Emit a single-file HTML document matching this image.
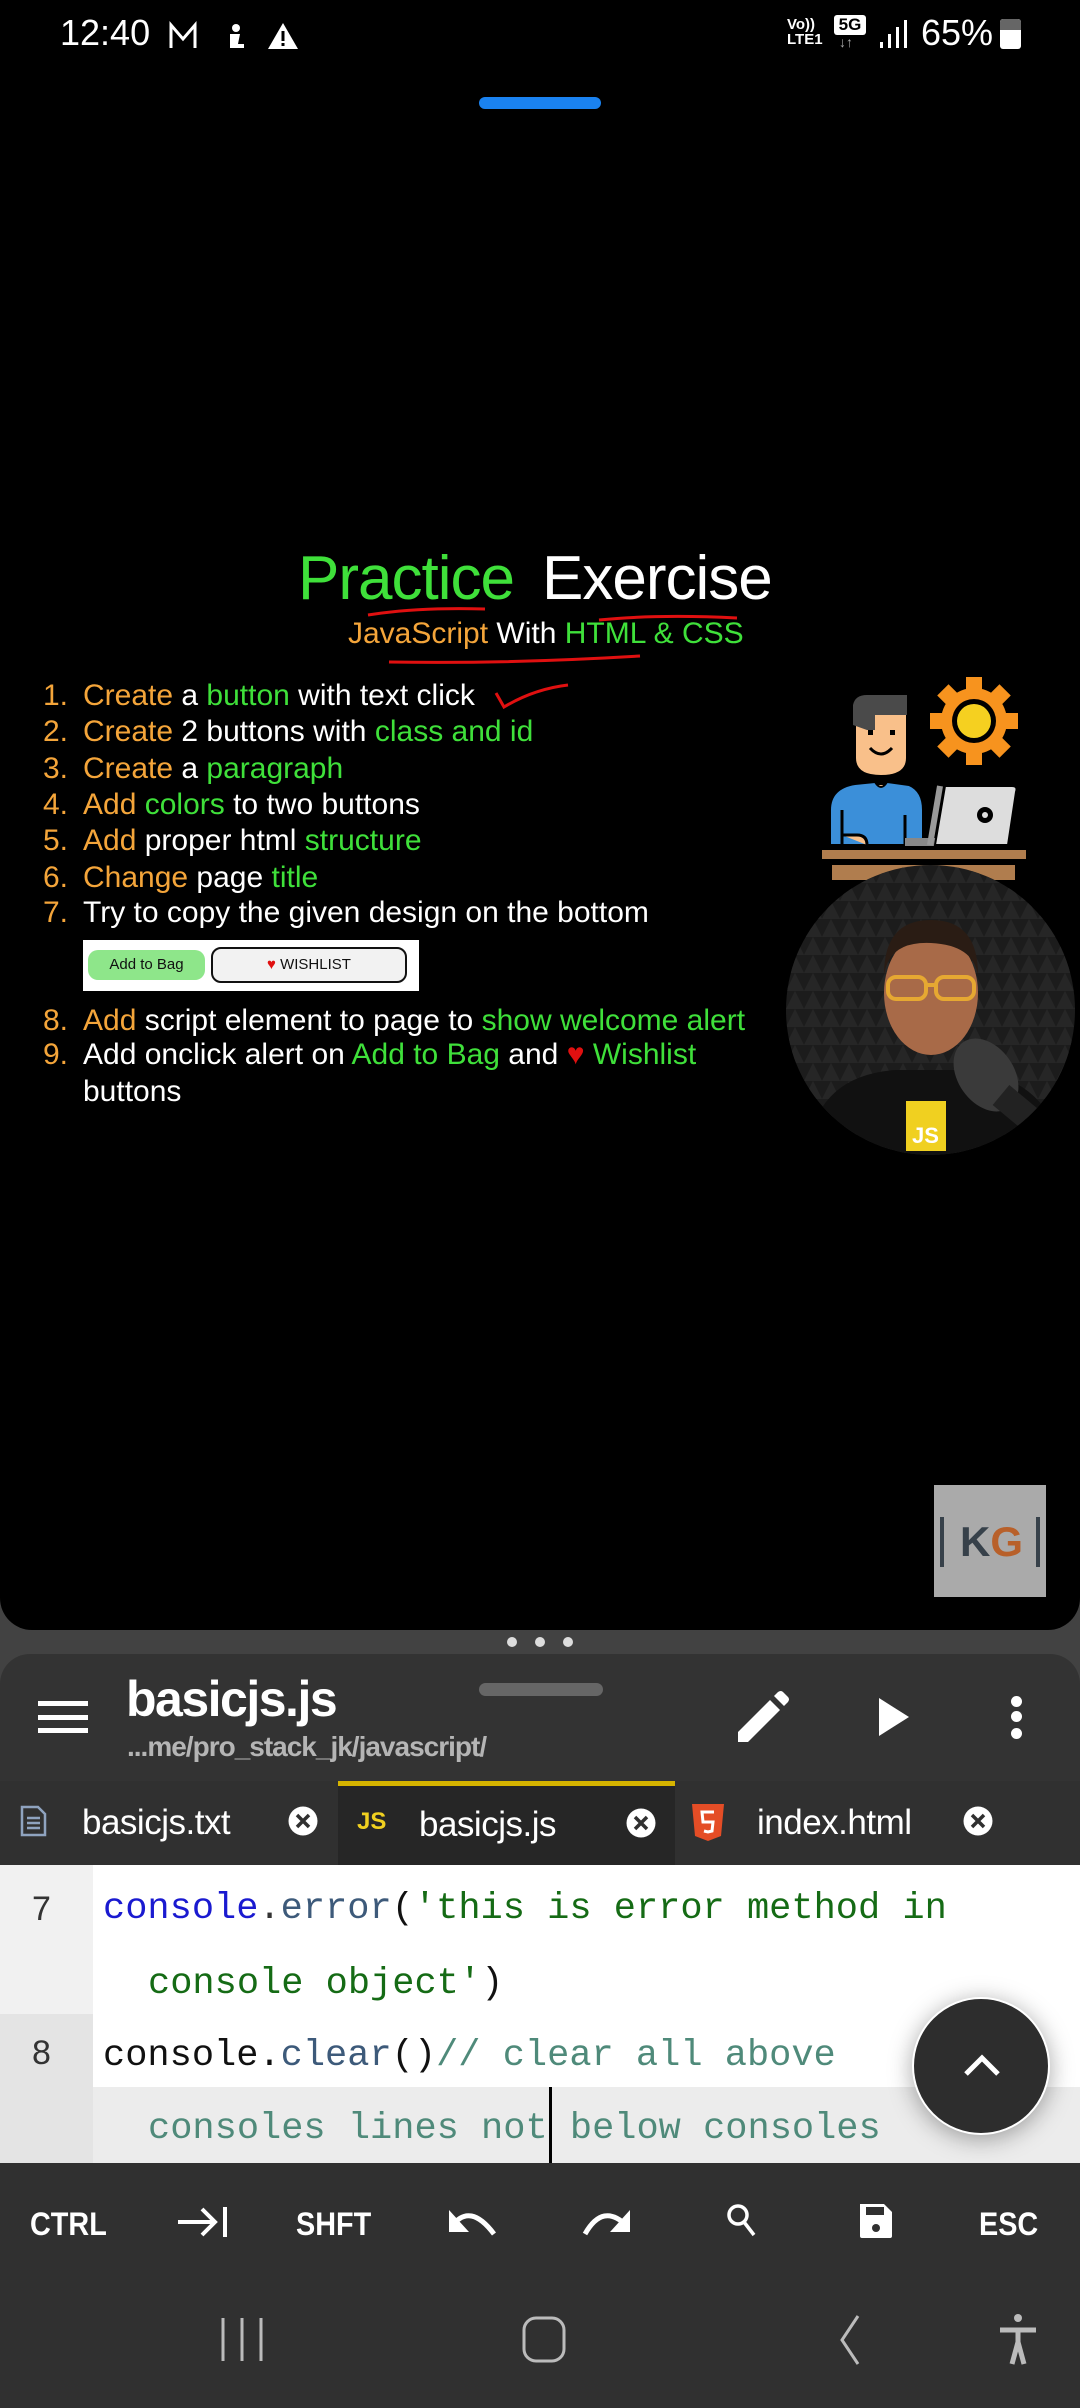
<!DOCTYPE html>
<html><head><meta charset="utf-8"><style>
*{margin:0;padding:0;box-sizing:border-box}
body{width:1080px;height:2408px;background:#424242;position:relative;overflow:hidden;font-family:"Liberation Sans",sans-serif}
.a{position:absolute;white-space:nowrap}
.o{color:#f4a53a}.g{color:#3fe03a}.w{color:#fff}
.li{position:absolute;left:0;font-size:30px;color:#fff;white-space:nowrap}
.li .n{position:absolute;left:43px;color:#f4a53a}
.li .t{position:absolute;left:83px}
.code{font-family:"Liberation Mono",monospace;font-size:37px;position:absolute;white-space:pre}
.key{position:absolute;top:2206px;font-size:32px;font-weight:bold;color:#fff;transform:scaleX(.9);transform-origin:left}
</style></head><body>
<div class="a" style="left:0;top:0;width:1080px;height:1630px;background:#000;border-radius:0 0 32px 32px"></div>
<div class="a" style="left:60px;top:12px;font-size:36px;color:#fff">12:40</div>
<svg class="a" style="left:168px;top:20px" width="135" height="32" viewBox="0 0 135 32">
<path d="M3 28V5l12 14L27 5v23" fill="none" stroke="#fff" stroke-width="3"/>
<circle cx="68" cy="8" r="4" fill="#fff"/><path d="M62 14h10l-2 10h6v4H62z" fill="#fff"/>
<path d="M100 29L115 3l15 26z" fill="#fff"/><rect x="113.5" y="11" width="3" height="10" fill="#000"/><rect x="113.5" y="23" width="3" height="3" fill="#000"/>
</svg>
<div class="a" style="left:787px;top:17px;font-size:15px;color:#fff;line-height:15px;font-weight:bold">Vo))<br>LTE1</div>
<div class="a" style="left:834px;top:15px;width:32px;height:20px;background:#fff;border-radius:3px;color:#000;font-size:17px;font-weight:bold;text-align:center;line-height:20px">5G</div>
<div class="a" style="left:839px;top:34px;font-size:14px;color:#aaa">↓↑</div>
<svg class="a" style="left:880px;top:18px" width="30" height="32"><rect x="0" y="24" width="3" height="6" fill="#fff"/><rect x="8" y="16" width="3" height="14" fill="#fff"/><rect x="16" y="9" width="3" height="21" fill="#fff"/><rect x="24" y="2" width="3" height="28" fill="#fff"/></svg>
<div class="a" style="left:921px;top:12px;font-size:36px;color:#fff">65%</div>
<div class="a" style="left:1000px;top:19px;width:21px;height:30px;background:#fff;border-radius:3px"></div>
<div class="a" style="left:1000px;top:19px;width:21px;height:11px;background:#666;border-radius:3px 3px 0 0"></div>
<div class="a" style="left:479px;top:97px;width:122px;height:12px;background:#1a82f0;border-radius:6px"></div>

<div class="a g" style="left:298px;top:543px;font-size:62px;letter-spacing:-1px">Practice</div>
<div class="a w" style="left:542px;top:543px;font-size:62px;letter-spacing:-1px">Exercise</div>
<div class="a" style="left:348px;top:617px;font-size:30px;letter-spacing:0px"><span class="o">JavaScript</span> <span class="w">With</span> <span class="g">HTML &amp; CSS</span></div>
<svg class="a" style="left:0;top:0" width="1080" height="720">
<path d="M368 615q50-8 117-6" stroke="#e01010" stroke-width="3" fill="none"/>
<path d="M599 620q60-6 138-2" stroke="#e01010" stroke-width="3" fill="none"/>
<path d="M389 662q120 2 251-6" stroke="#e01010" stroke-width="3" fill="none"/>
<path d="M496 693l8 14q30-18 64-22" stroke="#e01010" stroke-width="3" fill="none"/>
</svg>
<div class="li" style="top:679px"><span class="n">1.</span><span class="t"><span class="o">Create</span> a <span class="g">button</span> with text click</span></div>
<div class="li" style="top:715px"><span class="n">2.</span><span class="t"><span class="o">Create</span> 2 buttons with <span class="g">class and id</span></span></div>
<div class="li" style="top:752px"><span class="n">3.</span><span class="t"><span class="o">Create</span> a <span class="g">paragraph</span></span></div>
<div class="li" style="top:788px"><span class="n">4.</span><span class="t"><span class="o">Add</span> <span class="g">colors</span> to two buttons</span></div>
<div class="li" style="top:824px"><span class="n">5.</span><span class="t"><span class="o">Add</span> proper html <span class="g">structure</span></span></div>
<div class="li" style="top:861px"><span class="n">6.</span><span class="t"><span class="o">Change</span> page <span class="g">title</span></span></div>
<div class="li" style="top:896px"><span class="n">7.</span><span class="t">Try to copy the given design on the bottom</span></div>
<div class="a" style="left:83px;top:940px;width:336px;height:51px;background:#fff"></div>
<div class="a" style="left:88px;top:950px;width:117px;height:30px;background:#8ee68a;border-radius:10px;font-size:15px;color:#111;text-align:center;line-height:30px">Add to Bag</div>
<div class="a" style="left:211px;top:947px;width:196px;height:36px;border:2.5px solid #111;border-radius:10px;background:#f2f2f2;font-size:15px;color:#111;text-align:center;line-height:31px"><span style="color:#e01010">♥</span> WISHLIST</div>
<div class="li" style="top:1004px"><span class="n">8.</span><span class="t"><span class="o">Add</span> script element to page to <span class="g">show welcome alert</span></span></div>
<div class="li" style="top:1038px"><span class="n">9.</span><span class="t">Add onclick alert on <span class="g">Add to Bag</span> and <span style="color:#e01010">♥</span> <span class="g">Wishlist</span></span></div>
<div class="li" style="top:1075px"><span class="t">buttons</span></div>

<svg class="a" style="left:780px;top:660px" width="300" height="500" viewBox="0 0 300 500">
<g fill="#f7931e"><circle cx="194" cy="61" r="33"/>
<g transform="translate(194 61)"><rect x="-8" y="-44" width="16" height="88"/><rect x="-8" y="-44" width="16" height="88" transform="rotate(45)"/><rect x="-8" y="-44" width="16" height="88" transform="rotate(90)"/><rect x="-8" y="-44" width="16" height="88" transform="rotate(135)"/></g></g>
<circle cx="194" cy="61" r="22" fill="#000"/><circle cx="194" cy="61" r="17" fill="#f5d020"/>
<rect x="93" y="125" width="10" height="12" fill="#f9c08a"/>
<path d="M75 62q0-24 24-24h28v60q0 18-26 18t-26-18z" fill="#f9c08a" stroke="#000" stroke-width="2"/>
<path d="M73 45q2-10 14-10h40v20H95v15h-8l-14-5z" fill="#4a4a4a"/>
<rect x="88" y="70" width="5" height="5" fill="#000"/><rect x="110" y="70" width="5" height="5" fill="#000"/>
<path d="M90 88q11 12 22 0" stroke="#000" stroke-width="3" fill="none"/>
<path d="M50 185v-35q0-22 25-26l20-2q6 10 12 0l22 3q14 6 14 25v35z" fill="#3b8fd9" stroke="#000" stroke-width="2"/>
<path d="M62 150v35M125 155v30" stroke="#000" stroke-width="3"/>
<path d="M62 175h15q10 0 10 10" stroke="#000" stroke-width="3" fill="#f9c08a"/>
<rect x="125" y="178" width="38" height="8" fill="#888"/>
<path d="M165 126h67q6 0 4 6l-8 53h-73z" fill="#ddd" stroke="#000" stroke-width="2"/>
<path d="M160 126l-10 59" stroke="#999" stroke-width="6"/>
<circle cx="205" cy="155" r="8" fill="#000"/><circle cx="205" cy="155" r="3" fill="#ddd"/>
<rect x="42" y="190" width="204" height="9" fill="#b07d4e"/>
<rect x="52" y="205" width="183" height="15" fill="#b07d4e"/>
</svg>
<div class="a" style="left:786px;top:865px;width:289px;height:290px;border-radius:50%;background:#1c1c1c;overflow:hidden">
<svg width="289" height="290" viewBox="0 0 289 290">
<defs><pattern id="p" width="18" height="18" patternUnits="userSpaceOnUse"><path d="M0 18L9 0l9 18z" fill="#262626"/></pattern></defs>
<rect width="289" height="290" fill="url(#p)"/>
<path d="M20 290q10-80 90-85h70q80 5 100 85z" fill="#111"/>
<ellipse cx="145" cy="128" rx="47" ry="62" fill="#a86a48"/>
<path d="M98 110q0-55 47-55t47 55q-5-30-47-32t-47 32z" fill="#2a1c14"/>
<rect x="102" y="112" width="38" height="22" rx="8" fill="none" stroke="#e6a832" stroke-width="4"/>
<rect x="150" y="112" width="38" height="22" rx="8" fill="none" stroke="#e6a832" stroke-width="4"/>
<path d="M140 120h10" stroke="#e6a832" stroke-width="4"/>
<rect x="120" y="236" width="40" height="50" fill="#f0d020"/>
<text x="126" y="278" font-family="Liberation Sans" font-weight="bold" font-size="22" fill="#fff">JS</text>
<ellipse cx="200" cy="210" rx="28" ry="40" fill="#3a3a3a" transform="rotate(-35 200 210)"/>
<path d="M215 230l60 50" stroke="#222" stroke-width="26"/>
</svg></div>
<div class="a" style="left:934px;top:1485px;width:112px;height:112px;background:#aaa"></div>
<div class="a" style="left:940px;top:1517px;width:100px;height:50px;border-left:4px solid #37414a;border-right:4px solid #37414a"></div>
<div class="a" style="left:960px;top:1518px;font-size:42px;font-weight:bold"><span style="color:#37414a">K</span><span style="color:#b8602a">G</span></div>

<div class="a" style="left:507px;top:1637px;width:10px;height:10px;border-radius:50%;background:#ddd"></div>
<div class="a" style="left:535px;top:1637px;width:10px;height:10px;border-radius:50%;background:#ddd"></div>
<div class="a" style="left:563px;top:1637px;width:10px;height:10px;border-radius:50%;background:#ddd"></div>
<div class="a" style="left:0;top:1654px;width:1080px;height:260px;background:#333;border-radius:30px 30px 0 0"></div>
<div class="a" style="left:479px;top:1683px;width:124px;height:13px;background:#666;border-radius:7px"></div>
<div class="a" style="left:38px;top:1701px;width:50px;height:5px;background:#fff"></div>
<div class="a" style="left:38px;top:1715px;width:50px;height:5px;background:#fff"></div>
<div class="a" style="left:38px;top:1728px;width:50px;height:5px;background:#fff"></div>
<div class="a" style="left:126px;top:1670px;font-size:50px;font-weight:bold;color:#fff;letter-spacing:-1.5px">basicjs.js</div>
<div class="a" style="left:127px;top:1731px;font-size:28px;font-weight:bold;color:#b5b5b5;letter-spacing:-1px">...me/pro_stack_jk/javascript/</div>
<svg class="a" style="left:736px;top:1690px" width="56" height="56" viewBox="0 0 56 56"><path d="M2 42L34 10l10 10L12 52H2z" fill="#fff"/><path d="M38 6l4-4q3-2 5 0l5 5q2 2 0 5l-4 4z" fill="#fff"/></svg>
<svg class="a" style="left:879px;top:1698px" width="32" height="40"><path d="M0 0L30 19L0 38z" fill="#fff"/></svg>
<div class="a" style="left:1011px;top:1696px;width:11px;height:11px;border-radius:50%;background:#fff"></div>
<div class="a" style="left:1011px;top:1711px;width:11px;height:11px;border-radius:50%;background:#fff"></div>
<div class="a" style="left:1011px;top:1728px;width:11px;height:11px;border-radius:50%;background:#fff"></div>
<div class="a" style="left:0;top:1781px;width:1080px;height:84px;background:#303030"></div>
<div class="a" style="left:338px;top:1781px;width:337px;height:84px;background:#262626;border-top:5px solid #d6b400"></div>
<svg class="a" style="left:20px;top:1805px" width="28" height="32"><path d="M2 2h16l7 7v21H2z" fill="none" stroke="#8fa3bf" stroke-width="2.5"/><path d="M7 13h13M7 18h13M7 23h13" stroke="#8fa3bf" stroke-width="2.5"/></svg>
<div class="a" style="left:82px;top:1803px;font-size:35px;color:#fff;letter-spacing:-.5px">basicjs.txt</div>
<div class="a" style="left:357px;top:1808px;font-size:24px;font-weight:bold;color:#f0d020">JS</div>
<div class="a" style="left:419px;top:1805px;font-size:35px;color:#fff;letter-spacing:-.5px">basicjs.js</div>
<svg class="a" style="left:692px;top:1804px" width="32" height="38"><path d="M0 0h32l-3 32-13 5-13-5z" fill="#e44d26"/><path d="M22 8H10l1 10h10l-1 9-4 1-4-1" fill="none" stroke="#fff" stroke-width="3"/></svg>
<div class="a" style="left:757px;top:1803px;font-size:35px;color:#fff;letter-spacing:-.5px">index.html</div>
<svg class="a" style="left:0;top:1790px" width="1080" height="60">
<g fill="#fff"><circle cx="303" cy="31" r="14.5"/><circle cx="641" cy="33" r="14.5"/><circle cx="978" cy="31" r="14.5"/></g>
<g stroke="#303030" stroke-width="3.5"><path d="M297 25l12 12M309 25l-12 12M635 27l12 12M647 27l-12 12M972 25l12 12M984 25l-12 12"/></g>
</svg>
<div class="a" style="left:0;top:1865px;width:1080px;height:298px;background:#fff"></div>
<div class="a" style="left:0;top:1865px;width:93px;height:149px;background:#f1f1f1"></div>
<div class="a" style="left:0;top:2014px;width:93px;height:149px;background:#e4e4e4"></div>
<div class="a" style="left:93px;top:2087px;width:987px;height:76px;background:#ececec"></div>
<div class="code" style="left:32px;top:1890px;color:#333;font-family:'Liberation Sans',sans-serif;font-size:34px">7</div>
<div class="code" style="left:32px;top:2034px;color:#333;font-family:'Liberation Sans',sans-serif;font-size:34px">8</div>
<div class="code" style="left:103px;top:1888px"><span style="color:#1a1ad0">console</span><span style="color:#333">.</span><span style="color:#3d5a7a">error</span><span style="color:#111">(</span><span style="color:#156b15">'this is error method in</span></div>
<div class="code" style="left:148px;top:1963px;color:#156b15">console object'<span style="color:#111">)</span></div>
<div class="code" style="left:103px;top:2035px"><span style="color:#111">console.</span><span style="color:#3d5a7a">clear</span><span style="color:#111">()</span><span style="color:#4f8a7a">// clear all above</span></div>
<div class="code" style="left:148px;top:2108px;color:#4f8a7a">consoles lines not below consoles</div>
<div class="a" style="left:549px;top:2087px;width:3px;height:76px;background:#000"></div>
<div class="a" style="left:912px;top:1997px;width:138px;height:138px;border-radius:50%;background:#2d2d2d;border:2px solid #fff;box-shadow:0 4px 24px rgba(0,0,0,.35)"></div>
<svg class="a" style="left:962px;top:2052px" width="40" height="26"><path d="M4 22L20 6l16 16" stroke="#fff" stroke-width="5" fill="none"/></svg>
<div class="a" style="left:0;top:2163px;width:1080px;height:245px;background:#303030"></div>
<div class="key" style="left:30px">CTRL</div>
<div class="key" style="left:296px">SHFT</div>
<div class="key" style="left:979px">ESC</div>
<svg class="a" style="left:0;top:2195px" width="1080" height="50" fill="#fff">
<path d="M178 27h36M202 14l13 13-13 13" stroke="#fff" stroke-width="4" fill="none"/><rect x="223" y="12" width="4" height="30"/>
<path d="M452 31q18-24 42 8" stroke="#fff" stroke-width="5" fill="none"/><path d="M449 15v22h20z"/>
<path d="M585 39q18-32 42-8" stroke="#fff" stroke-width="5" fill="none"/><path d="M630 15v22h-20z"/>
<circle cx="738" cy="20" r="9" stroke="#fff" stroke-width="3.5" fill="none"/><path d="M744 27l10 13" stroke="#fff" stroke-width="3.5"/>
<path d="M860 9h24l8 8v24q0 2-2 2h-28q-2 0-2-2z"/><rect x="866" y="12" width="18" height="8" fill="#303030"/><circle cx="876" cy="33" r="4" fill="#303030"/>
</svg>
<svg class="a" style="left:0;top:2310px" width="1080" height="60" fill="none" stroke="#bbb" stroke-width="3">
<path d="M223 8v43M242 8v43M261 8v43"/>
<rect x="524" y="8" width="40" height="43" rx="12"/>
<path d="M858 6l-16 24 16 24"/>
<circle cx="1018" cy="8" r="4" fill="#bbb" stroke="none"/><path d="M1000 20h36M1018 20v12l-6 22M1018 32l6 22" stroke-width="5"/>
</svg>
</body></html>
